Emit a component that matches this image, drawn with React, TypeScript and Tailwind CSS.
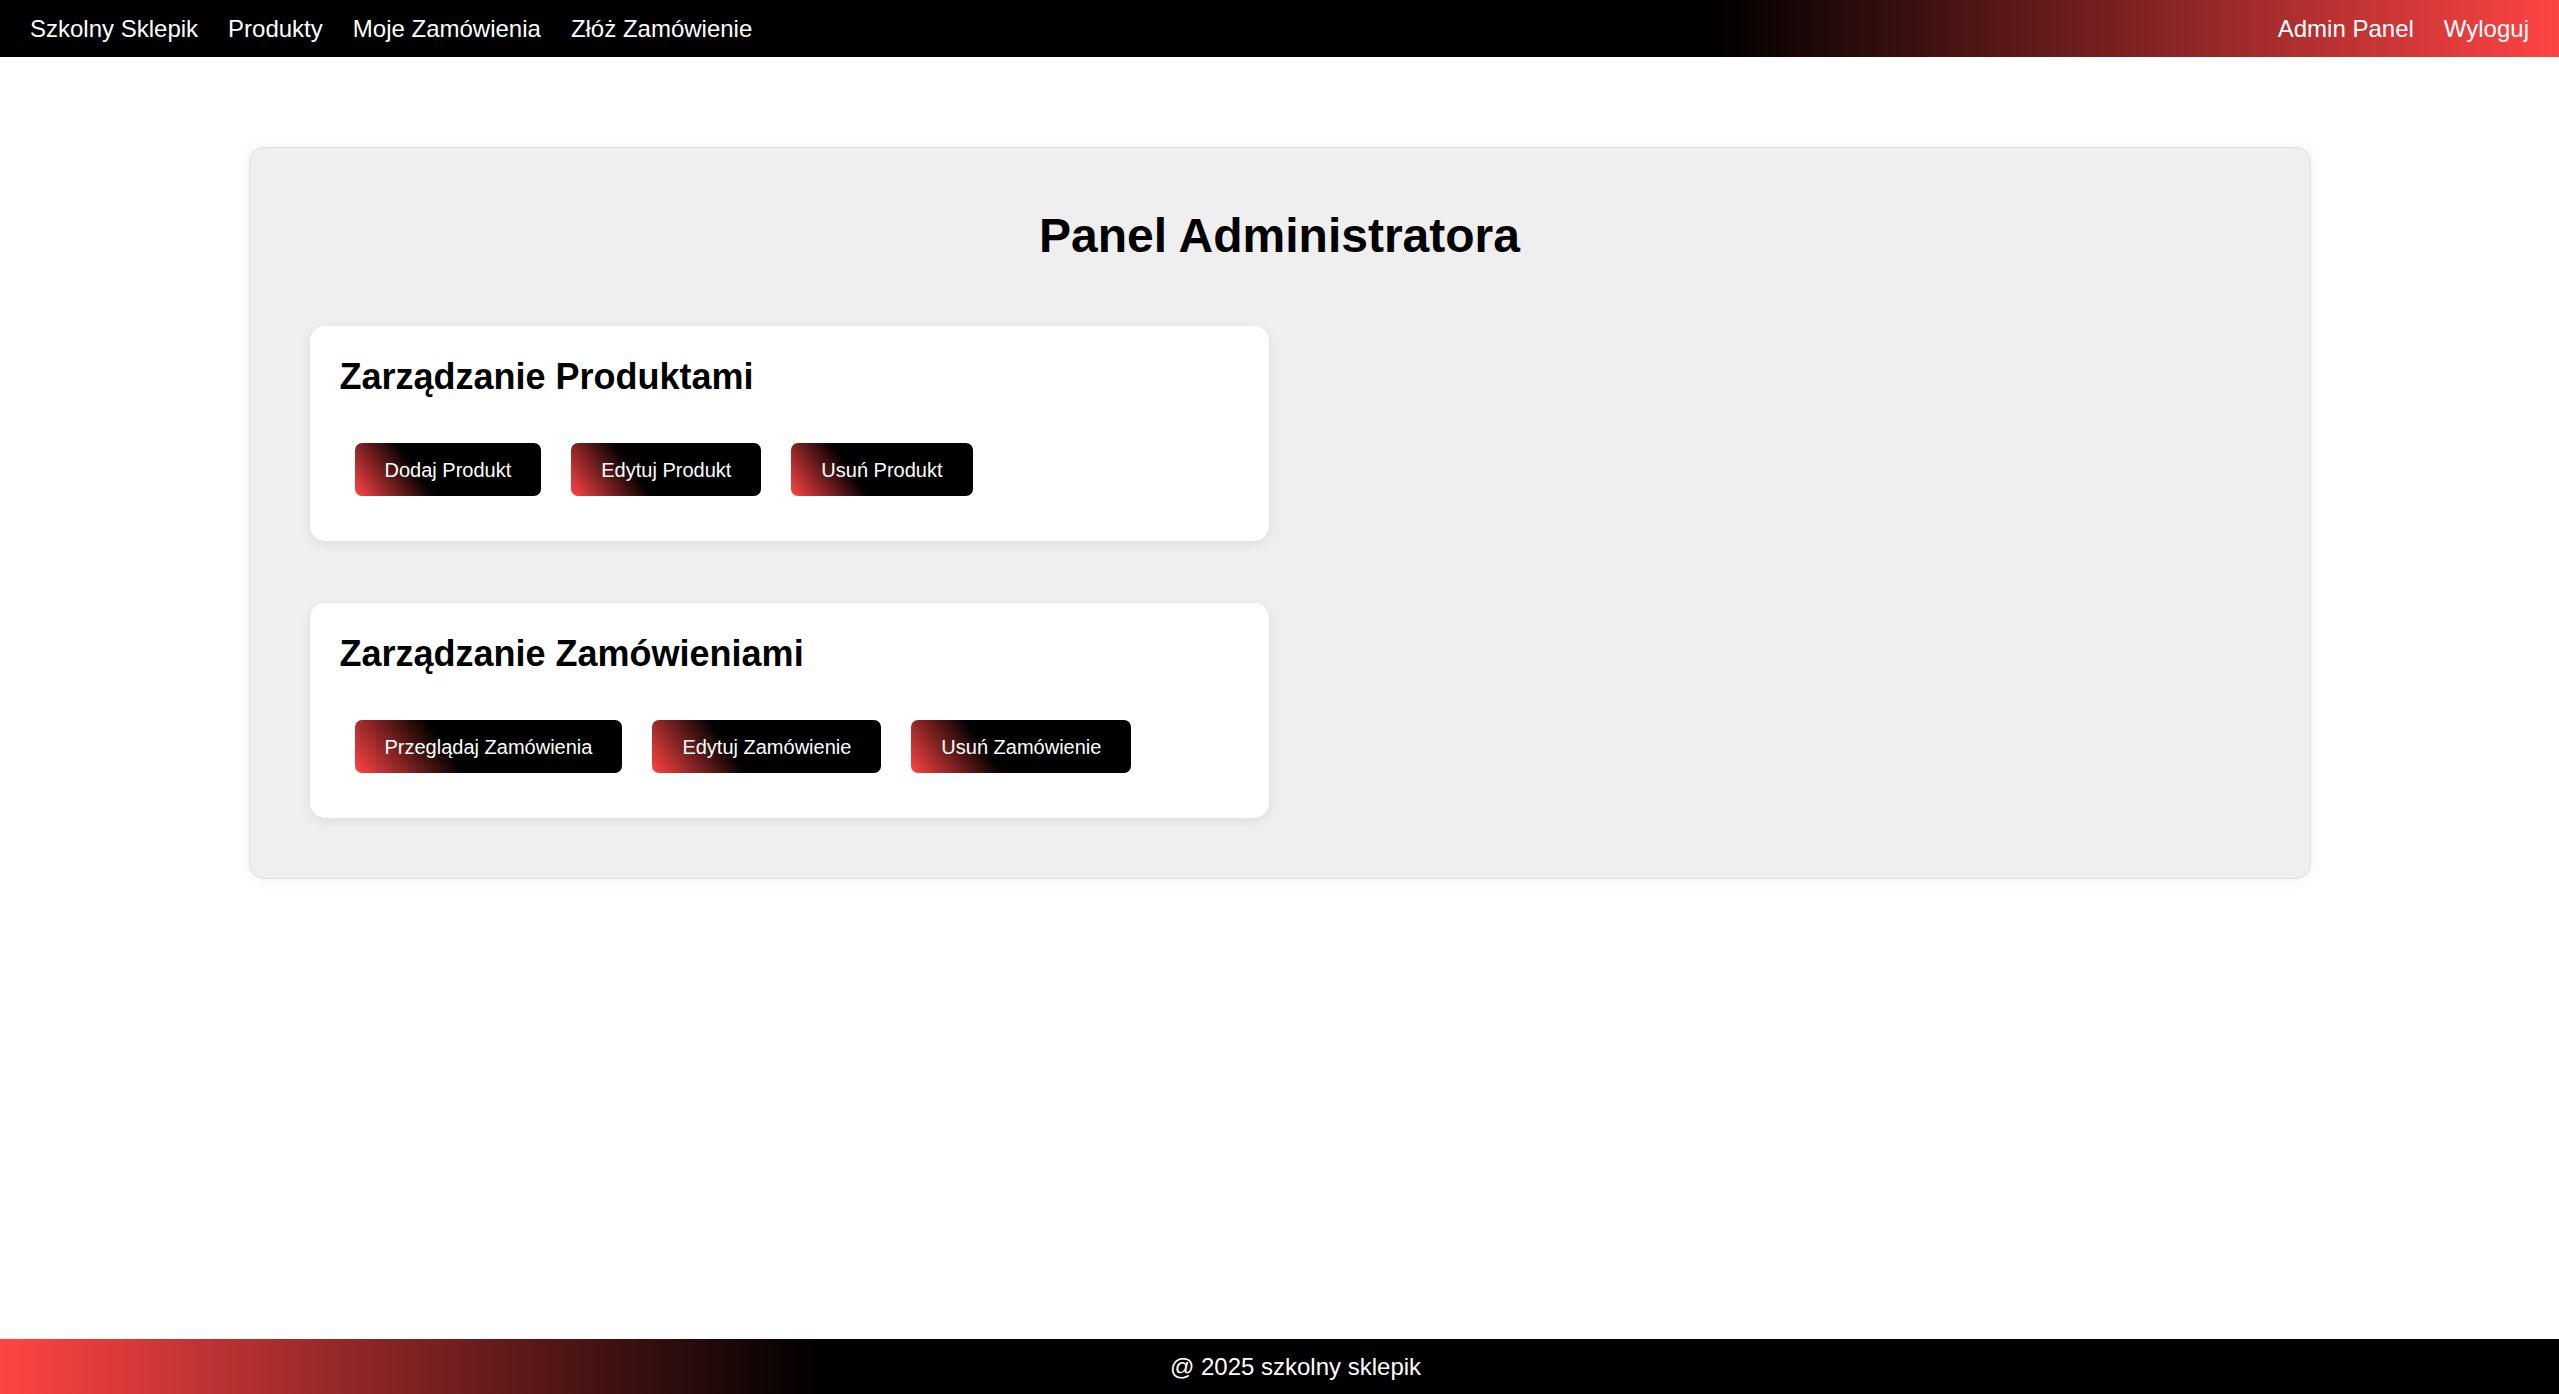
import React from "react";

const Btn = ({ label }: { label: string }) => (
  <button className="h-[53px] px-[30px] rounded-[7px] text-[20px] leading-none text-white bg-[linear-gradient(55deg,#ff4444_0%,#000000_36%)] whitespace-nowrap">
    {label}
  </button>
);

const Card = ({ title, buttons }: { title: string; buttons: string[] }) => (
  <section className="w-[959px] bg-white rounded-[15px] p-[30px] shadow-[0_3px_12px_rgba(0,0,0,0.08)]">
    <h2 className="text-[36px] font-bold leading-[41px] text-black mb-[31px]">{title}</h2>
    <div className="flex gap-[30px] p-[15px]">
      {buttons.map((b) => (
        <Btn key={b} label={b} />
      ))}
    </div>
  </section>
);

export default function App() {
  return (
    <div className="min-h-screen flex flex-col bg-white font-['Liberation_Sans',Arial,sans-serif]">
      <nav className="h-[57px] flex items-center justify-between px-[15px] bg-[linear-gradient(to_right,#000000_67%,#ff4444_100%)] text-white text-[24px]">
        <div className="flex">
          <a className="px-[15px]">Szkolny Sklepik</a>
          <a className="px-[15px]">Produkty</a>
          <a className="px-[15px]">Moje Zamówienia</a>
          <a className="px-[15px]">Złóż Zamówienie</a>
        </div>
        <div className="flex">
          <a className="px-[15px]">Admin Panel</a>
          <a className="px-[15px]">Wyloguj</a>
        </div>
      </nav>
      <main className="flex-1 pt-[90px]">
        <div className="w-[2062px] mx-auto bg-[#efefef] border border-[#dddddd] rounded-[15px] px-[60px] pt-[60px] pb-[60px] shadow-[0_0_15px_rgba(0,0,0,0.06)]">
          <h1 className="text-[48px] font-bold leading-[55px] text-black text-center mb-[63px]">
            Panel Administratora
          </h1>
          <div className="flex flex-col gap-[62px]">
            <Card title="Zarządzanie Produktami" buttons={["Dodaj Produkt", "Edytuj Produkt", "Usuń Produkt"]} />
            <Card
              title="Zarządzanie Zamówieniami"
              buttons={["Przeglądaj Zamówienia", "Edytuj Zamówienie", "Usuń Zamówienie"]}
            />
          </div>
        </div>
      </main>
      <footer className="h-[55px] flex items-center justify-center pl-[32px] bg-[linear-gradient(to_right,#ff4444_0%,#000000_32%)] text-white text-[24px]">
        @ 2025 szkolny sklepik
      </footer>
    </div>
  );
}
